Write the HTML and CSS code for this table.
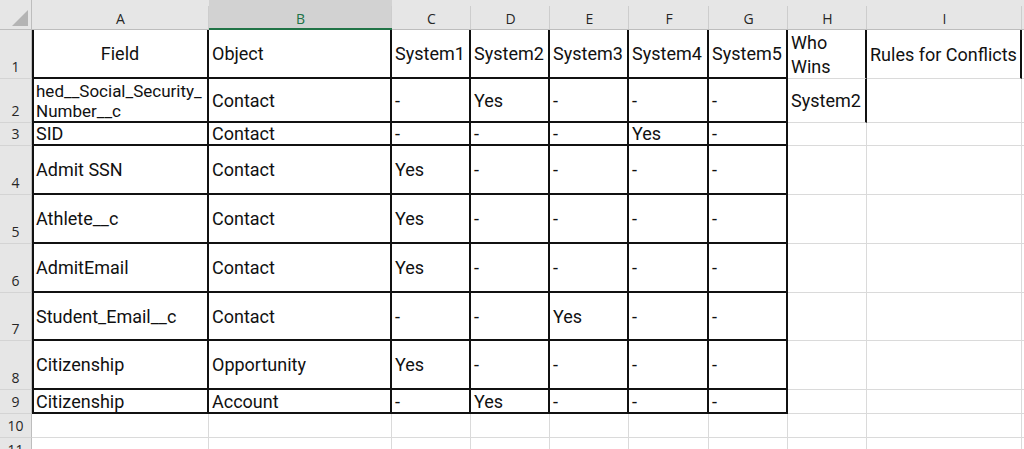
FILE: index.html
```html
<!DOCTYPE html>
<html>
<head>
<meta charset="utf-8">
<link rel="stylesheet" href="styles.css">
</head>
<body>
<div class="sheet">
  <div class="corner"><span class="tri"></span></div>
  <div class="ch">A</div>
  <div class="ch sel">B</div>
  <div class="ch">C</div>
  <div class="ch">D</div>
  <div class="ch">E</div>
  <div class="ch">F</div>
  <div class="ch">G</div>
  <div class="ch">H</div>
  <div class="ch">I</div>
  <div class="ch"></div>

  <div class="rh">1</div>
  <div class="c b bl center">Field</div>
  <div class="c b">Object</div>
  <div class="c b">System1</div>
  <div class="c b">System2</div>
  <div class="c b">System3</div>
  <div class="c b">System4</div>
  <div class="c b">System5</div>
  <div class="c br wrap">Who Wins</div>
  <div class="c br">Rules for Conflicts</div>
  <div class="c"></div>

  <div class="rh">2</div>
  <div class="c b bl wrap small">hed__Social_Security_<wbr>Number__c</div>
  <div class="c b">Contact</div>
  <div class="c b">-</div>
  <div class="c b">Yes</div>
  <div class="c b">-</div>
  <div class="c b">-</div>
  <div class="c b">-</div>
  <div class="c br">System2</div>
  <div class="c"></div>
  <div class="c"></div>

  <div class="rh">3</div>
  <div class="c b bl">SID</div>
  <div class="c b">Contact</div>
  <div class="c b">-</div>
  <div class="c b">-</div>
  <div class="c b">-</div>
  <div class="c b">Yes</div>
  <div class="c b">-</div>
  <div class="c"></div>
  <div class="c"></div>
  <div class="c"></div>

  <div class="rh">4</div>
  <div class="c b bl">Admit SSN</div>
  <div class="c b">Contact</div>
  <div class="c b">Yes</div>
  <div class="c b">-</div>
  <div class="c b">-</div>
  <div class="c b">-</div>
  <div class="c b">-</div>
  <div class="c"></div>
  <div class="c"></div>
  <div class="c"></div>

  <div class="rh">5</div>
  <div class="c b bl">Athlete__c</div>
  <div class="c b">Contact</div>
  <div class="c b">Yes</div>
  <div class="c b">-</div>
  <div class="c b">-</div>
  <div class="c b">-</div>
  <div class="c b">-</div>
  <div class="c"></div>
  <div class="c"></div>
  <div class="c"></div>

  <div class="rh">6</div>
  <div class="c b bl">AdmitEmail</div>
  <div class="c b">Contact</div>
  <div class="c b">Yes</div>
  <div class="c b">-</div>
  <div class="c b">-</div>
  <div class="c b">-</div>
  <div class="c b">-</div>
  <div class="c"></div>
  <div class="c"></div>
  <div class="c"></div>

  <div class="rh">7</div>
  <div class="c b bl">Student_Email__c</div>
  <div class="c b">Contact</div>
  <div class="c b">-</div>
  <div class="c b">-</div>
  <div class="c b">Yes</div>
  <div class="c b">-</div>
  <div class="c b">-</div>
  <div class="c"></div>
  <div class="c"></div>
  <div class="c"></div>

  <div class="rh">8</div>
  <div class="c b bl">Citizenship</div>
  <div class="c b">Opportunity</div>
  <div class="c b">Yes</div>
  <div class="c b">-</div>
  <div class="c b">-</div>
  <div class="c b">-</div>
  <div class="c b">-</div>
  <div class="c"></div>
  <div class="c"></div>
  <div class="c"></div>

  <div class="rh">9</div>
  <div class="c b bl">Citizenship</div>
  <div class="c b">Account</div>
  <div class="c b">-</div>
  <div class="c b">Yes</div>
  <div class="c b">-</div>
  <div class="c b">-</div>
  <div class="c b">-</div>
  <div class="c"></div>
  <div class="c"></div>
  <div class="c"></div>

  <div class="rh">10</div>
  <div class="c"></div>
  <div class="c"></div>
  <div class="c"></div>
  <div class="c"></div>
  <div class="c"></div>
  <div class="c"></div>
  <div class="c"></div>
  <div class="c"></div>
  <div class="c"></div>
  <div class="c"></div>

  <div class="rh">11</div>
  <div class="c"></div>
  <div class="c"></div>
  <div class="c"></div>
  <div class="c"></div>
  <div class="c"></div>
  <div class="c"></div>
  <div class="c"></div>
  <div class="c"></div>
  <div class="c"></div>
  <div class="c"></div>
</div>
</body>
</html>
```

FILE: styles.css
```css
html, body {
  margin: 0;
  padding: 0;
  background: #ffffff;
  overflow: hidden;
}

.sheet {
  display: grid;
  grid-template-columns: 32px 177px 183px 79px 79px 79px 80px 79px 79px 155px 1fr;
  grid-template-rows: 30px 49px 44px 23px 49px 49px 49px 48px 49px 24px 24px 24px;
  width: 1024px;
}

.sheet > div {
  box-sizing: border-box;
  min-width: 0;
}

.corner {
  background: #e6e6e6;
  border-right: 1px solid #bdbdbd;
  border-bottom: 1px solid #bdbdbd;
  display: flex;
  align-items: flex-end;
  justify-content: flex-end;
  padding: 0 3px 3px 0;
}

.tri {
  display: block;
  width: 16px;
  height: 16px;
  background: #b4b4b4;
  clip-path: polygon(100% 0, 100% 100%, 0 100%);
}

.ch {
  font-family: "Open Sans", "Noto Sans", sans-serif;
  font-size: 14px;
  line-height: 16px;
  color: #262626;
  background-color: #e6e6e6;
  background-image: linear-gradient(to right, transparent calc(100% - 1px), #cdcdcd calc(100% - 1px));
  background-position: 0 6px;
  background-size: 100% 100%;
  background-repeat: no-repeat;
  border-bottom: 1px solid #bdbdbd;
  display: flex;
  align-items: center;
  justify-content: center;
  padding-top: 9px;
}

.ch.sel {
  background-color: #d2d2d2;
  color: #217346;
  border-bottom: 2px solid #217346;
  padding-top: 10px;
}

.rh {
  font-family: "Open Sans", "Noto Sans", sans-serif;
  font-size: 14px;
  line-height: 16px;
  color: #262626;
  background: #e6e6e6;
  border-right: 1px solid #bdbdbd;
  border-bottom: 1px solid #d4d4d4;
  display: flex;
  align-items: flex-end;
  justify-content: center;
  padding-bottom: 3px;
}

.c {
  font-family: Roboto, "Liberation Sans", sans-serif;
  font-size: 18px;
  line-height: 24px;
  color: #111111;
  border-right: 1px solid #dadada;
  border-bottom: 1px solid #dadada;
  padding: 1px 3px 0;
  display: flex;
  align-items: center;
  white-space: nowrap;
  overflow: hidden;
}

.c.b {
  border-right: 2px solid #111111;
  border-bottom: 2px solid #111111;
}

.c.br {
  border-right: 2px solid #111111;
}

.c.bl {
  border-left: 2px solid #111111;
  padding-left: 2px;
}

.c.center {
  justify-content: center;
}

.c.wrap {
  white-space: normal;
}

.c.small {
  font-size: 17px;
  line-height: 20px;
}
```
